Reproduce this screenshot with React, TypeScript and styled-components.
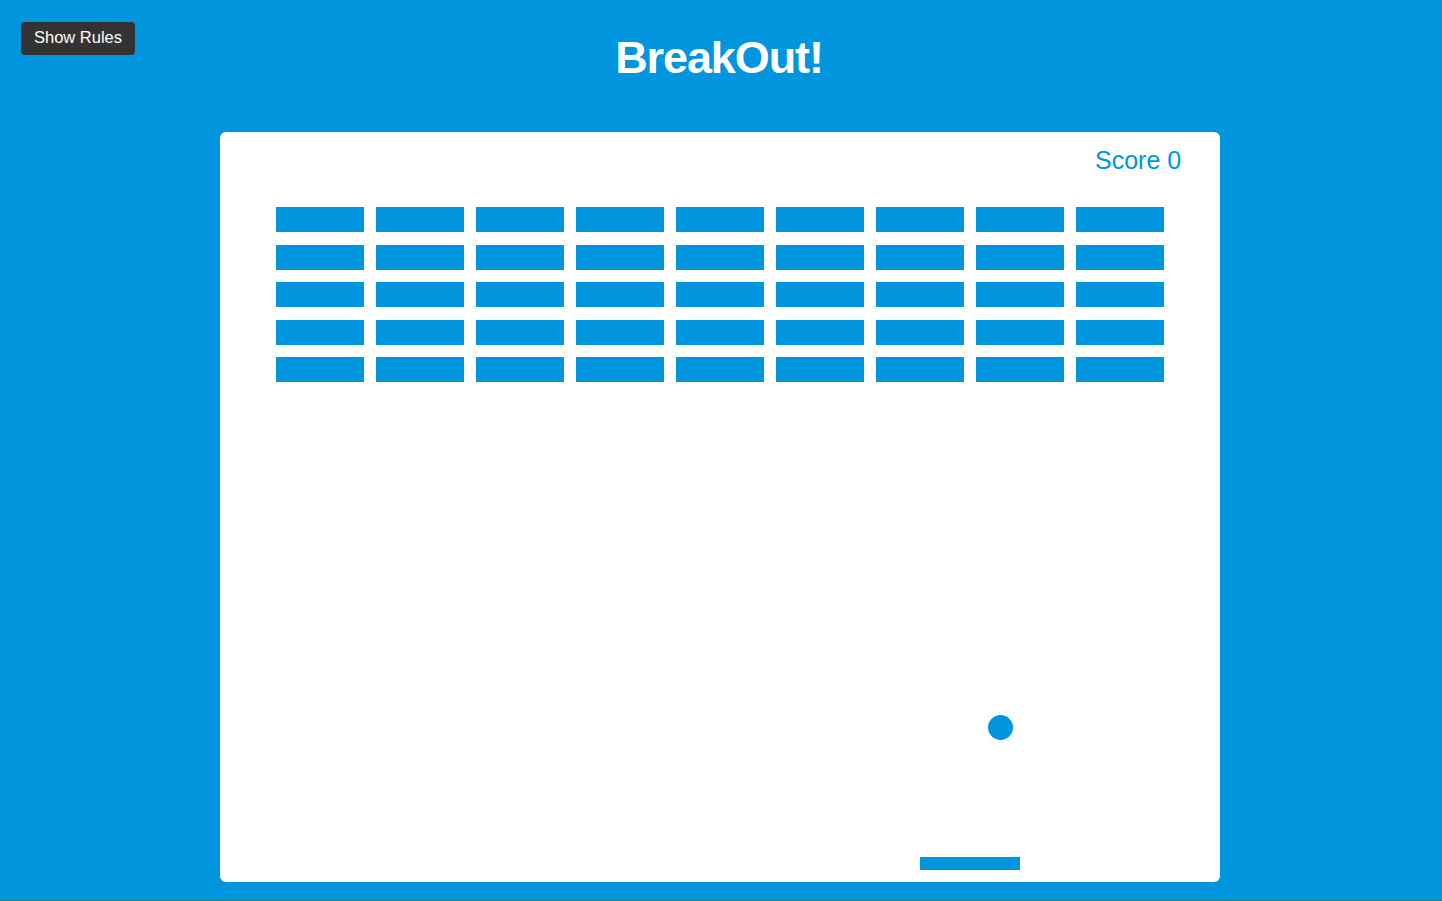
import React from "react";
import styled, { createGlobalStyle } from "styled-components";

const GlobalStyle = createGlobalStyle`
  html, body {
    margin: 0;
    padding: 0;
  }
  body {
    background: #0095dd;
    font-family: "Liberation Sans", Arial, sans-serif;
    min-height: 100vh;
    box-sizing: border-box;
    border-bottom: 1px solid #217f86;
  }
`;

const Page = styled.div`
  position: relative;
  display: flex;
  flex-direction: column;
  align-items: center;
  padding-right: 2px;
`;

const RulesButton = styled.button`
  position: absolute;
  top: 22px;
  left: 21px;
  height: 33px;
  padding: 0 13px 2px;
  background: #333333;
  color: #ffffff;
  border: none;
  border-radius: 4px;
  font-family: "Liberation Sans", Arial, sans-serif;
  font-size: 16.5px;
  cursor: pointer;
`;

const Title = styled.h1`
  margin: 35px 2px 52px 0;
  font-family: "Liberation Sans", Arial, sans-serif;
  font-weight: 700;
  font-size: 45px;
  line-height: 45px;
  letter-spacing: -1.1px;
  color: #ffffff;
`;

const Board = styled.div`
  position: relative;
  width: 1000px;
  height: 750px;
  background: #ffffff;
  border-radius: 6px;
  display: flex;
  flex-direction: column;
`;

const ScoreRow = styled.div`
  padding: 16px 0 0 875px;
  height: 25px;
  font-family: "Liberation Sans", Arial, sans-serif;
  font-size: 25px;
  line-height: 25px;
  color: #0095dd;
`;

const BrickGrid = styled.div`
  margin: 34px 0 0 56.25px;
  display: grid;
  grid-template-columns: repeat(9, 87.5px);
  grid-auto-rows: 25px;
  column-gap: 12.5px;
  row-gap: 12.5px;
`;

const Brick = styled.div<{ $visible: boolean }>`
  background: ${(p) => (p.$visible ? "#0095dd" : "transparent")};
`;

const Ball = styled.div<{ $r: number }>`
  position: absolute;
  width: ${(p) => p.$r * 2}px;
  height: ${(p) => p.$r * 2}px;
  border-radius: 50%;
  background: #0095dd;
`;

const Paddle = styled.div`
  position: absolute;
  width: 100px;
  height: 12.5px;
  background: #0095dd;
`;

const bricks = Array.from({ length: 45 }, (_, i) => ({ id: i, visible: true }));

export default function App() {
  const ball = { x: 780, y: 595, r: 12.5 };
  const paddle = { x: 700, y: 725 };
  return (
    <>
      <GlobalStyle />
      <Page>
        <RulesButton>Show Rules</RulesButton>
        <Title>BreakOut!</Title>
        <Board>
          <ScoreRow>Score 0</ScoreRow>
          <BrickGrid>
            {bricks.map((b) => (
              <Brick key={b.id} $visible={b.visible} />
            ))}
          </BrickGrid>
          <Ball
            $r={ball.r}
            style={{ left: ball.x - ball.r, top: ball.y - ball.r }}
          />
          <Paddle style={{ left: paddle.x, top: paddle.y }} />
        </Board>
      </Page>
    </>
  );
}
